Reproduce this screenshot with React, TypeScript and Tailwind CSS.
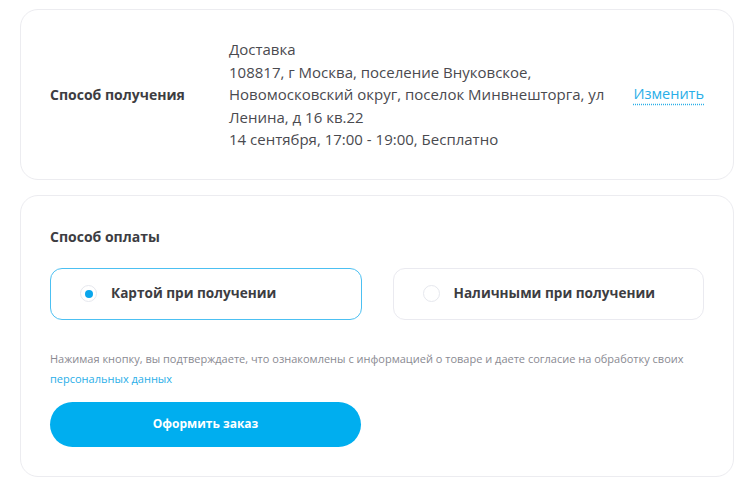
import { useState } from 'react';

const font = { fontFamily: '"Open Sans", "Noto Sans", Arial, sans-serif' };

const options = [
  { id: 'card', label: 'Картой при получении' },
  { id: 'cash', label: 'Наличными при получении' },
];

const App = () => {
  const [payment, setPayment] = useState('card');

  return (
    <div className="min-h-screen bg-white text-[#4a4a4f]" style={font}>
      <div className="flex w-[714px] flex-col gap-[15px] pl-[20px] pt-[9px]" style={{ boxSizing: 'content-box' }}>
        {/* Delivery */}
        <div className="flex items-center rounded-[18px] border border-[#ececf0] px-[29px] py-[28px]">
          <div className="w-[179px] shrink-0 text-[14px] font-bold text-[#3d3d42]">Способ получения</div>
          <div className="w-[386px] text-[15px] leading-[22.5px]">
            <p>Доставка</p>
            <p>108817, г Москва, поселение Внуковское, Новомосковский округ, поселок Минвнешторга, ул Ленина, д 16 кв.22</p>
            <p>14 сентября, 17:00 - 19:00, Бесплатно</p>
          </div>
          <a
            href="#"
            className="ml-auto text-[14.5px] text-[#29aee8] underline decoration-dotted decoration-[#29aee8] underline-offset-[4px]"
          >
            Изменить
          </a>
        </div>

        {/* Payment */}
        <div className="rounded-[18px] border border-[#ececf0] px-[29px] pb-[29px] pt-[31px]">
          <h2 className="text-[14px] font-bold leading-[20px] text-[#3d3d42]">Способ оплаты</h2>
          <div className="mt-[21px] grid grid-cols-2 gap-[31px]">
            {options.map(opt => {
              const active = payment === opt.id;
              return (
                <button
                  key={opt.id}
                  onClick={() => setPayment(opt.id)}
                  className={`flex h-[52px] items-center gap-[14px] rounded-[12px] border px-[29px] text-left ${
                    active ? 'border-[#4cc0f2]' : 'border-[#eaeaf0]'
                  }`}
                >
                  <span className="flex h-[17px] w-[17px] items-center justify-center rounded-full border border-[#e6e8ee]">
                    {active && <span className="h-[8px] w-[8px] rounded-full bg-[#0aa6ec]" />}
                  </span>
                  <span className="text-[13.6px] font-bold text-[#3d3d42]">{opt.label}</span>
                </button>
              );
            })}
          </div>
          <p className="mt-[29px] text-[11px] leading-[20px] text-[#8a8a92]">
            Нажимая кнопку, вы подтверждаете, что ознакомлены с информацией о товаре и даете согласие на обработку своих{' '}
            <a href="#" className="text-[#29aee8]">персональных данных</a>
          </p>
          <button className="mt-[13px] flex h-[45px] w-[311px] items-center justify-center rounded-full bg-[#00aeef] text-[12px] font-bold text-white">
            Оформить заказ
          </button>
        </div>
      </div>
    </div>
  );
};

export default App;
